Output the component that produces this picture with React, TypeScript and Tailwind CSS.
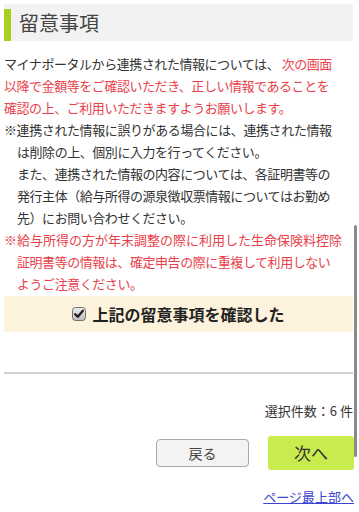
import React from 'react';

// ─── Notice text ──────────────────────────────────────────────────────────────

const font = "font-['Hiragino_Sans','Noto_Sans_CJK_JP',sans-serif]";

function CheckIcon() {
  return (
    <svg width="14" height="14" viewBox="0 0 14 14" className="shrink-0">
      <defs>
        <linearGradient id="cb" x1="0" y1="0" x2="0" y2="1">
          <stop offset="0" stopColor="#eeeeee" />
          <stop offset="1" stopColor="#bdbdbd" />
        </linearGradient>
      </defs>
      <rect x="0.5" y="0.5" width="13" height="13" rx="3" fill="url(#cb)" stroke="#6f6f6f" />
      <path d="M3.2 7.2 L5.8 9.8 L10.9 3.8" fill="none" stroke="#1e1e1e" strokeWidth="2.3" strokeLinecap="round" strokeLinejoin="round" />
    </svg>
  );
}

export default function App() {
  return (
    <div className={`relative w-[359px] h-[512px] overflow-hidden bg-white text-[#333] ${font}`}>
      {/* heading */}
      <div className="ml-1 mr-[6px] mt-1 h-[37px] bg-[#f2f2f2] flex items-stretch">
        <div className="w-[7px] mt-[5px] bg-[#a9cf1c]" />
        <h2 className="pl-[8px] pt-[6px] text-[20px] leading-[26px] text-[#444]">留意事項</h2>
      </div>

      {/* body */}
      <div className="pl-1 pt-[12px] text-[13px] leading-[22px] whitespace-nowrap tracking-[-0.45px]">
        <p>
          マイナポータルから連携された情報については、<span className="text-[#e8414a]"> 次の画面</span>
        </p>
        <p className="text-[#e8414a]">以降で金額等をご確認いただき、正しい情報であることを</p>
        <p className="text-[#e8414a]">確認の上、ご利用いただきますようお願いします。</p>
        <p className="tracking-[-0.4px]">※連携された情報に誤りがある場合には、連携された情報</p>
        <p className="pl-[13px]">は削除の上、個別に入力を行ってください。</p>
        <p className="pl-[13px]">また、連携された情報の内容については、各証明書等の</p>
        <p className="pl-[13px]">発行主体（給与所得の源泉徴収票情報についてはお勤め</p>
        <p className="pl-[13px]">先）にお問い合わせください。</p>
        <p className="text-[#e8414a] tracking-[0px]">※給与所得の方が年末調整の際に利用した生命保険料控除</p>
        <p className="pl-[13px] text-[#e8414a]">証明書等の情報は、確定申告の際に重複して利用しない</p>
        <p className="pl-[13px] text-[#e8414a]">ようご注意ください。</p>
      </div>

      {/* confirm band */}
      <div className="ml-1 mr-[6px] mt-[1px] h-[36px] bg-[#fdf2dc] flex items-center justify-center gap-[6px]">
        <CheckIcon />
        <span className="text-[16px] font-bold text-[#222]">上記の留意事項を確認した</span>
      </div>

      <div className="ml-1 mr-[6px] mt-[40px] h-[2px] bg-[#cfcfcf]" />

      <p className="mt-[27px] pr-[6px] text-right text-[13px] leading-[20px] text-[#333]">選択件数：6 件</p>

      <div className="mt-[15px] flex justify-end items-center gap-[19px] pr-[5px]">
        <button className="w-[93px] h-[28px] rounded-[4px] border border-[#a8a8a8] bg-[#f3f3f3] text-[14px] text-[#444]">
          戻る
        </button>
        <button className="w-[86px] h-[34px] rounded-[3px] bg-[#c8eb4d] text-[17px] text-[#333]">次へ</button>
      </div>

      <div className="mt-[15px] pr-[5px] text-right leading-[20px]">
        <a href="#" className="text-[13px] text-[#3b43d0] underline">ページ最上部へ</a>
      </div>

      {/* scroll indicator */}
      <div className="absolute left-[354px] top-[225px] w-[3px] h-[232px] rounded-full bg-[#8a8a8a]" />
    </div>
  );
}
